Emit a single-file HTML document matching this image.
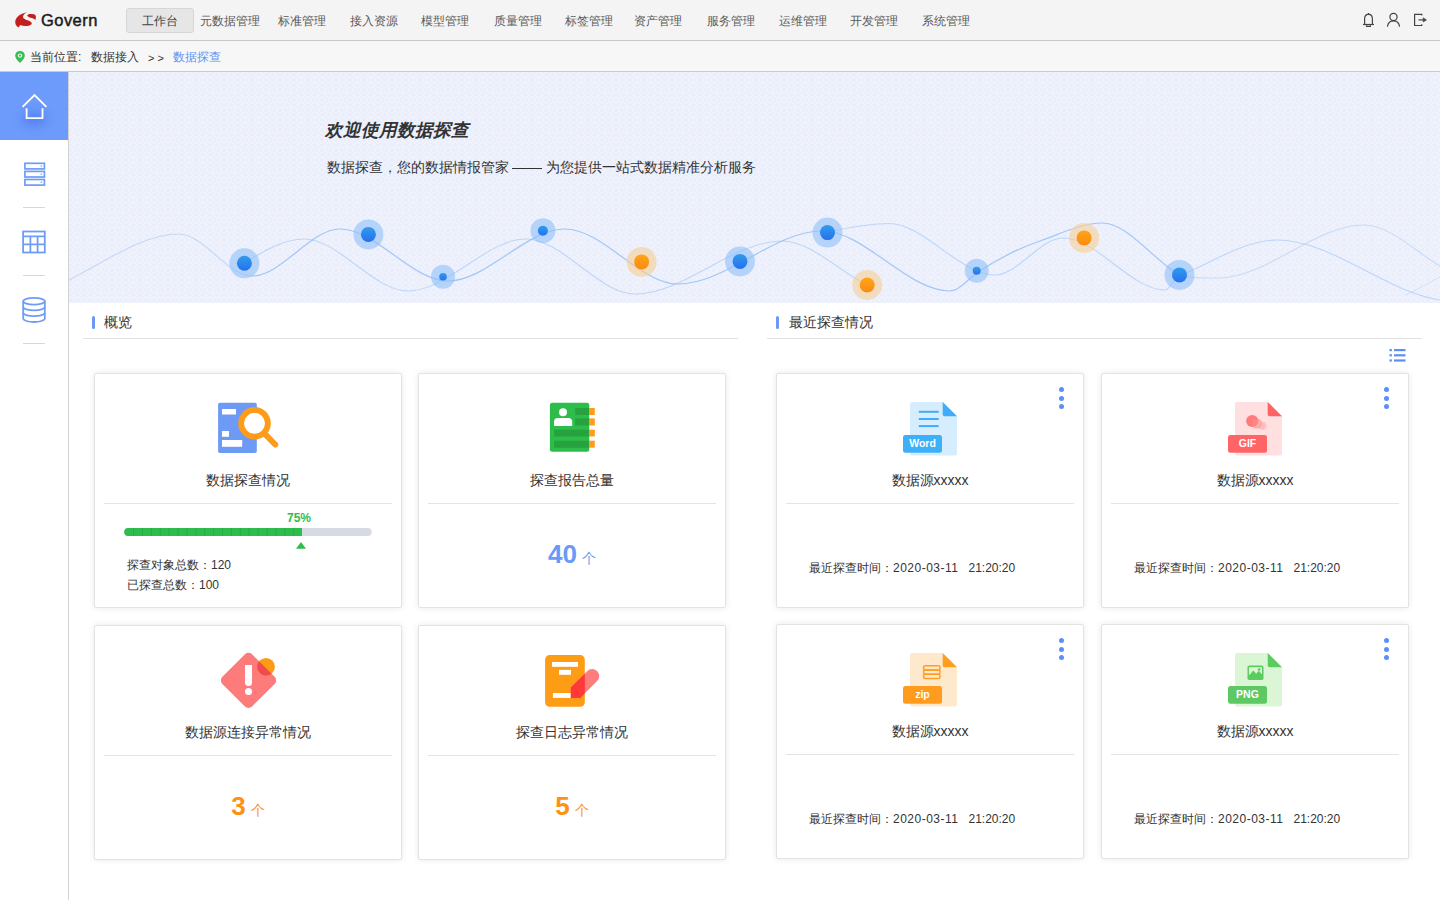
<!DOCTYPE html>
<html><head><meta charset="utf-8">
<style>
*{margin:0;padding:0;box-sizing:border-box}
html,body{width:1440px;height:900px;overflow:hidden;background:#fff;font-family:"Liberation Sans",sans-serif;color:#333}
.abs{position:absolute}
.t{position:absolute;white-space:nowrap;line-height:1}
#hdr{position:absolute;left:0;top:0;width:1440px;height:41px;background:#f4f4f4;border-bottom:1px solid #c9c9c9}
.nav{position:absolute;top:15px;font-size:12px;line-height:12px;color:#5a5a5a;white-space:nowrap}
#btn{position:absolute;left:126px;top:8px;width:68px;height:25px;background:#e6e6e6;border:1px solid #d6d6d6;border-radius:3px}
#crumb{position:absolute;left:0;top:41px;width:1440px;height:31px;background:#f7f7f7;border-bottom:1px solid #cbcbcb}
#side{position:absolute;left:0;top:72px;width:69px;height:828px;background:#fff;border-right:1px solid #d3d3d3}
#home{position:absolute;left:0;top:0;width:68px;height:68px;background:#6c9bfb}
.sep{position:absolute;left:23px;width:22px;height:1px;background:#d8d8d8}
#banner{position:absolute;left:69px;top:72px;width:1371px;height:231px;background:#eaeefb;overflow:hidden}
.sec-bar{position:absolute;width:3px;height:13px;background:#6b99f8;border-radius:2px}
.sec-t{position:absolute;font-size:14px;line-height:14px;color:#333;white-space:nowrap}
.sec-line{position:absolute;height:1px;background:#e2e2e2}
.card{position:absolute;width:308px;height:235px;background:#fff;border:1px solid #e3e3e3;border-radius:2px;box-shadow:0 0 6px rgba(0,0,0,0.09)}
.card .ttl{position:absolute;left:0;width:306px;top:99px;text-align:center;font-size:14px;line-height:14px;color:#333;white-space:nowrap}
.card .dv{position:absolute;left:9px;width:288px;top:129px;height:1px;background:#e4e4e4}
.card svg{position:absolute}
.num{position:absolute;left:0;width:306px;top:165px;text-align:center;white-space:nowrap}
.num b{font-size:26px;font-weight:bold}
.num span{font-size:14px;margin-left:5px;font-weight:500;position:relative;top:-0.5px}
.dots{position:absolute;left:282px;top:13px;width:5px}
.dots i{display:block;width:5px;height:5px;border-radius:50%;background:#5d8ff6;margin-bottom:3.6px}
.time{position:absolute;left:32px;top:187.5px;font-size:12px;line-height:12px;color:#333;white-space:nowrap}
</style></head>
<body>
<!-- HEADER -->
<div id="hdr">
  <svg class="abs" style="left:12px;top:9px" width="28" height="22" viewBox="12 9 28 22">
    <path d="M27.6 12.2 C24.5 12.6 21 13.8 18.6 15.8 C16 18 14.8 20.6 15.4 23.4 C15.8 25.4 17.4 26.9 19.1 27.6 C19.3 26.6 19.6 25.4 20.3 25 C22.3 25.9 25 26.3 27.5 25.9 C30 25.5 31.8 24.6 31.8 23.4 C31.5 21.8 29.6 20.8 27.4 20.2 C25.5 19.6 23.7 19 23.1 17.6 C22.7 16.4 23.6 14.6 24.9 13.6 C25.8 12.9 26.8 12.5 27.6 12.2 Z" fill="#c11f20"/>
    <path d="M27.2 15.8 C27.6 14.8 28.4 14.2 29.4 14.1 C31.2 13.9 33.4 14 34.6 14.6 C35.6 15.2 36 16.2 35.9 17.4 C35.8 18.4 35.6 19.3 35.4 20 C34.4 19 33 18.3 31.5 18 C30 17.6 28.6 17.2 27.2 15.8 Z" fill="#c11f20"/>
  </svg>
  <div class="t" style="left:41px;top:12px;font-size:16.5px;line-height:17px;color:#1a1a1a;font-weight:normal;-webkit-text-stroke:0.45px #1a1a1a;letter-spacing:0.45px">Govern</div>
  <div id="btn"></div>
  <div class="nav" style="left:141.5px;color:#444">工作台</div>
  <div class="nav" style="left:200px">元数据管理</div>
  <div class="nav" style="left:278px">标准管理</div>
  <div class="nav" style="left:350px">接入资源</div>
  <div class="nav" style="left:421px">模型管理</div>
  <div class="nav" style="left:494px">质量管理</div>
  <div class="nav" style="left:564.5px">标签管理</div>
  <div class="nav" style="left:634px">资产管理</div>
  <div class="nav" style="left:707px">服务管理</div>
  <div class="nav" style="left:779px">运维管理</div>
  <div class="nav" style="left:850px">开发管理</div>
  <div class="nav" style="left:922px">系统管理</div>
  <svg class="abs" style="left:1360px;top:12px" width="70" height="17" viewBox="1360 12 70 17" fill="none" stroke="#444" stroke-width="1.2">
    <path d="M1364.6 24.4 V19 C1364.6 16.2 1366.3 14.3 1368.5 14.1 C1370.7 14.3 1372.4 16.2 1372.4 19 V24.4"/>
    <path d="M1363 24.5 H1374"/><path d="M1368.5 13 V14.2"/>
    <path d="M1366.6 25.2 V26.3 H1370.4 V25.2"/>
    <circle cx="1393.5" cy="17" r="3.6"/>
    <path d="M1387.4 26.6 C1388 22.8 1390.3 20.8 1393.5 20.8 C1396.7 20.8 1399 22.8 1399.6 26.6"/>
    <path d="M1421.8 15.5 V14.4 H1414.6 V25.5 H1421.8 V24.3"/>
    <path d="M1418.5 19.9 H1424.5"/>
    <path d="M1423.2 17.8 L1426.5 19.9 L1423.2 22 Z" fill="#444" stroke-width="0.6"/>
  </svg>
</div>
<!-- BREADCRUMB -->
<div id="crumb">
  <svg class="abs" style="left:14px;top:9px" width="12" height="14" viewBox="0 0 12 14">
    <path d="M6 1 C3.2 1 1.2 3 1.2 5.6 C1.2 8.6 4.4 11.4 6 13 C7.6 11.4 10.8 8.6 10.8 5.6 C10.8 3 8.8 1 6 1 Z" fill="#35bf53"/>
    <circle cx="6" cy="5.6" r="2.2" fill="#f7f7f7"/><circle cx="6" cy="5.6" r="1.1" fill="#35bf53"/>
  </svg>
  <div class="t" style="left:30px;top:10px;font-size:12px;line-height:12px;color:#333">当前位置:</div>
  <div class="t" style="left:91px;top:10px;font-size:12px;line-height:12px;color:#333">数据接入</div>
  <div class="t" style="left:148px;top:11px;font-size:11px;line-height:12px;color:#333">&gt; &gt;</div>
  <div class="t" style="left:173px;top:10px;font-size:12px;line-height:12px;color:#5f95f2">数据探查</div>
</div>
<!-- SIDEBAR -->
<div id="side">
  <div id="home">
    <div class="abs" style="left:22px;top:40px;width:25px;height:14px;border-radius:50%;background:rgba(60,100,240,0.45);filter:blur(5px)"></div>
    <svg class="abs" style="left:20px;top:20px" width="28" height="28" viewBox="20 92 28 28" fill="none" stroke="#fff" stroke-width="1.8" stroke-linejoin="miter">
      <path d="M22.6 106.9 L34.5 95 L46.4 106.9"/>
      <path d="M26.6 108.2 V118.2 H42.5 V108.2"/>
    </svg>
  </div>
  <svg class="abs" style="left:20px;top:88px" width="28" height="28" viewBox="20 160 28 28" fill="none" stroke="#6f9df6" stroke-width="1.7">
    <rect x="24.9" y="163.3" width="19.5" height="5.6"/>
    <rect x="24.9" y="171.4" width="19.5" height="5.6"/>
    <rect x="24.9" y="179.5" width="19.5" height="5.6"/>
    <circle cx="41.3" cy="166.1" r="0.8" fill="#6f9df6" stroke="none"/>
    <circle cx="41.3" cy="174.2" r="0.8" fill="#6f9df6" stroke="none"/>
    <circle cx="41.3" cy="182.3" r="0.8" fill="#6f9df6" stroke="none"/>
  </svg>
  <div class="sep" style="top:135px"></div>
  <svg class="abs" style="left:20px;top:156px" width="28" height="28" viewBox="20 228 28 28" fill="none" stroke="#6f9df6" stroke-width="1.8">
    <rect x="23.1" y="231.5" width="21.7" height="21"/>
    <path d="M23.1 236.3 H44.8 M23.1 244.4 H44.8 M30.4 236.3 V252.5 M37.6 236.3 V252.5"/>
  </svg>
  <div class="sep" style="top:203px"></div>
  <svg class="abs" style="left:20px;top:224px" width="28" height="28" viewBox="20 296 28 28" fill="none" stroke="#6f9df6" stroke-width="1.8">
    <ellipse cx="34" cy="301.2" rx="10.8" ry="3.4"/>
    <path d="M23.2 301.2 V318.6 C23.2 320.5 28 322 34 322 C40 322 44.8 320.5 44.8 318.6 V301.2"/>
    <path d="M23.2 307 C23.2 308.9 28 310.4 34 310.4 C40 310.4 44.8 308.9 44.8 307"/>
    <path d="M23.2 312.8 C23.2 314.7 28 316.2 34 316.2 C40 316.2 44.8 314.7 44.8 312.8"/>
  </svg>
  <div class="sep" style="top:271px"></div>
</div>
<!-- BANNER -->
<div id="banner">
  <svg class="abs" style="left:0;top:0" width="1371" height="231" viewBox="69 72 1371 231">
    <defs>
      <pattern id="pt" x="0" y="0" width="14" height="10" patternUnits="userSpaceOnUse">
        <path d="M7 1.5 L11 5 L7 8.5 L3 5 Z M0 -3.5 L4 0 L0 3.5 M14 -3.5 L10 0 L14 3.5 M0 6.5 L4 10 L0 13.5 M14 6.5 L10 10 L14 13.5" fill="none" stroke="#f2f4fd" stroke-width="1.1"/>
      </pattern>
      <radialGradient id="gb" cx="0.5" cy="0.2" r="0.8"><stop offset="0" stop-color="#35a6f0"/><stop offset="1" stop-color="#2470ee"/></radialGradient>
      <linearGradient id="gbl" x1="0" y1="0" x2="0" y2="1"><stop offset="0" stop-color="#2f9ded"/><stop offset="1" stop-color="#2670ee"/></linearGradient>
      <linearGradient id="go" x1="0" y1="0" x2="0" y2="1"><stop offset="0" stop-color="#ffa516"/><stop offset="1" stop-color="#fb8a12"/></linearGradient>
    </defs>
    <rect x="69" y="72" width="1371" height="231" fill="url(#pt)"/>
    <g fill="none" stroke="#8dbdf6" stroke-linecap="round">
<path d="M40.0 292.0 C86.3 278.1 132.7 234.0 179.0 234.0 C203.3 234.0 227.7 276.0 252.0 276.0" stroke-opacity="0.45" stroke-width="1.1"/>
<path d="M252.0 276.0 C281.3 276.0 310.7 229.0 340.0 229.0 C376.0 229.0 412.0 281.0 448.0 281.0 C487.0 281.0 526.0 229.0 565.0 229.0 C602.7 229.0 640.3 284.0 678.0 284.0 C726.0 284.0 774.0 231.0 822.0 231.0 C864.7 231.0 907.3 291.0 950.0 291.0 C959.0 291.0 968.0 279.3 977.0 273.0 C998.0 258.3 1019.0 248.3 1040.0 241.0 C1060.7 233.8 1081.3 223.0 1102.0 223.0 C1127.7 223.0 1153.3 259.6 1179.0 275.0" stroke-opacity="0.80" stroke-width="1.2"/>
<path d="M244.0 263.0 C264.0 251.0 284.0 239.0 304.0 239.0 C338.7 239.0 373.3 291.0 408.0 291.0 C447.3 291.0 486.7 239.0 526.0 239.0 C562.3 239.0 598.7 294.0 635.0 294.0 C684.0 294.0 733.0 241.0 782.0 241.0 C810.3 241.0 838.7 270.8 867.0 285.0" stroke-opacity="0.50" stroke-width="1.1"/>
<path d="M827.0 232.0 C847.7 227.9 868.3 223.5 889.0 223.5 C918.3 223.5 947.7 259.3 977.0 271.0 C983.0 273.4 989.0 275.0 995.0 275.0 C1017.7 275.0 1040.3 238.0 1063.0 238.0 C1097.0 238.0 1131.0 290.0 1165.0 290.0 C1169.7 290.0 1174.3 277.9 1179.0 276.0 C1211.7 262.9 1244.3 240.0 1277.0 240.0 C1331.3 240.0 1385.7 291.9 1440.0 300.0" stroke-opacity="0.50" stroke-width="1.1"/>
<path d="M1179.0 275.0 C1192.0 278.9 1205.0 278.0 1218.0 278.0 C1266.7 278.0 1315.3 225.0 1364.0 225.0 C1389.3 225.0 1414.7 250.8 1440.0 266.0" stroke-opacity="0.40" stroke-width="1.1"/>
<path d="M1405.0 295.0 C1416.7 290.3 1428.3 282.8 1440.0 277.0" stroke-opacity="0.30" stroke-width="1.0"/>

    </g>
    <g>
<circle cx="244.4" cy="263.3" r="15.0" fill="#8fc0fa" fill-opacity="0.6"/><circle cx="244.4" cy="263.3" r="7.5" fill="url(#gbl)"/>
<circle cx="368.4" cy="234.4" r="15.0" fill="#8fc0fa" fill-opacity="0.6"/><circle cx="368.4" cy="234.4" r="7.5" fill="url(#gbl)"/>
<circle cx="443.0" cy="276.7" r="12.0" fill="#8fc0fa" fill-opacity="0.6"/><circle cx="443.0" cy="276.7" r="3.8" fill="url(#gbl)"/>
<circle cx="542.9" cy="230.7" r="12.5" fill="#8fc0fa" fill-opacity="0.6"/><circle cx="542.9" cy="230.7" r="5.0" fill="url(#gbl)"/>
<circle cx="641.6" cy="261.9" r="15.0" fill="#f6cf95" fill-opacity="0.6"/><circle cx="641.6" cy="261.9" r="7.5" fill="url(#go)"/>
<circle cx="740.0" cy="261.4" r="15.0" fill="#8fc0fa" fill-opacity="0.6"/><circle cx="740.0" cy="261.4" r="7.5" fill="url(#gbl)"/>
<circle cx="827.5" cy="232.6" r="15.0" fill="#8fc0fa" fill-opacity="0.6"/><circle cx="827.5" cy="232.6" r="7.5" fill="url(#gbl)"/>
<circle cx="867.2" cy="285.0" r="15.0" fill="#f6cf95" fill-opacity="0.6"/><circle cx="867.2" cy="285.0" r="7.5" fill="url(#go)"/>
<circle cx="976.7" cy="270.8" r="12.0" fill="#8fc0fa" fill-opacity="0.6"/><circle cx="976.7" cy="270.8" r="4.0" fill="url(#gbl)"/>
<circle cx="1084.1" cy="237.9" r="15.0" fill="#f6cf95" fill-opacity="0.6"/><circle cx="1084.1" cy="237.9" r="7.5" fill="url(#go)"/>
<circle cx="1179.5" cy="274.9" r="15.0" fill="#8fc0fa" fill-opacity="0.6"/><circle cx="1179.5" cy="274.9" r="7.5" fill="url(#gbl)"/>
    </g>
  </svg>
  <div class="t" style="left:255.5px;top:48.5px;font-size:17.5px;line-height:18px;font-weight:bold;font-style:italic;color:#333">欢迎使用数据探查</div>
  <div class="t" style="left:257.5px;top:87.5px;font-size:14px;line-height:14px;color:#333">数据探查，您的数据情报管家 <span style="display:inline-block;transform:scaleX(1.07);margin:0 1px">——</span> 为您提供一站式数据精准分析服务</div>
</div>
<!-- SECTION HEADERS -->
<div class="sec-bar" style="left:92px;top:316px"></div>
<div class="sec-t" style="left:104px;top:315px">概览</div>
<div class="sec-line" style="left:83px;top:338px;width:655px"></div>
<div class="sec-bar" style="left:776px;top:316px"></div>
<div class="sec-t" style="left:789px;top:315px">最近探查情况</div>
<div class="sec-line" style="left:767px;top:338px;width:655px"></div>
<svg class="abs" style="left:1388px;top:347px" width="20" height="16" viewBox="1388 347 20 16" fill="#5d8ff6">
  <rect x="1389.5" y="349" width="2.4" height="2.2"/><rect x="1394" y="349" width="11.5" height="2.2"/>
  <rect x="1389.5" y="354.2" width="2.4" height="2.2"/><rect x="1394" y="354.2" width="11.5" height="2.2"/>
  <rect x="1389.5" y="359.4" width="2.4" height="2.2"/><rect x="1394" y="359.4" width="11.5" height="2.2"/>
</svg>
<div class="card" style="left:94px;top:373px">
<svg style="left:0;top:0" width="306" height="233" viewBox="95 374 306 233">
<rect x="218.1" y="402.8" width="38.7" height="50.2" rx="1.8" fill="#6c9af5"/>
<rect x="222" y="409" width="14" height="5.5" fill="#fff"/>
<rect x="222" y="431" width="7" height="5.8" fill="#fff"/>
<rect x="222" y="440" width="20.2" height="6.8" fill="#fff"/>
<line x1="264.5" y1="433.5" x2="275.2" y2="444.5" stroke="#fd9c1b" stroke-width="6" stroke-linecap="round"/>
<circle cx="254.5" cy="423.3" r="13.4" fill="#fff" stroke="#fd9c1b" stroke-width="5.8"/>
<rect x="124.2" y="528" width="247.5" height="8" rx="4" fill="#d6dbe3"/>
<path d="M128.2 528 H302 V536 H128.2 A4 4 0 0 1 128.2 528 Z" fill="#2dbd4c"/>
<g stroke="#27a843" stroke-width="0.8">
<line x1="133.5" y1="528" x2="133.5" y2="536"/>
<line x1="142.4" y1="528" x2="142.4" y2="536"/>
<line x1="151.3" y1="528" x2="151.3" y2="536"/>
<line x1="160.2" y1="528" x2="160.2" y2="536"/>
<line x1="169.1" y1="528" x2="169.1" y2="536"/>
<line x1="178.0" y1="528" x2="178.0" y2="536"/>
<line x1="186.9" y1="528" x2="186.9" y2="536"/>
<line x1="195.8" y1="528" x2="195.8" y2="536"/>
<line x1="204.7" y1="528" x2="204.7" y2="536"/>
<line x1="213.6" y1="528" x2="213.6" y2="536"/>
<line x1="222.5" y1="528" x2="222.5" y2="536"/>
<line x1="231.4" y1="528" x2="231.4" y2="536"/>
<line x1="240.3" y1="528" x2="240.3" y2="536"/>
<line x1="249.2" y1="528" x2="249.2" y2="536"/>
<line x1="258.1" y1="528" x2="258.1" y2="536"/>
<line x1="267.0" y1="528" x2="267.0" y2="536"/>
<line x1="275.9" y1="528" x2="275.9" y2="536"/>
<line x1="284.8" y1="528" x2="284.8" y2="536"/>
<line x1="293.7" y1="528" x2="293.7" y2="536"/>
</g>
<path d="M296 548.8 L306 548.8 L301 541.9 Z" fill="#2dbd4c"/>
</svg>
<div class="ttl">数据探查情况</div>
<div class="dv"></div>
<div class="t" style="left:192px;top:138px;font-size:12px;line-height:12px;font-weight:bold;color:#2dbd4c">75%</div>
<div class="t" style="left:32px;top:185px;font-size:12px;line-height:12px;color:#333">探查对象总数：120</div>
<div class="t" style="left:32px;top:205px;font-size:12px;line-height:12px;color:#333">已探查总数：100</div>

</div>
<div class="card" style="left:418px;top:373px">
<svg style="left:0;top:0" width="306" height="233" viewBox="419 374 306 233">
<rect x="549.9" y="402.8" width="39.4" height="48.9" rx="2.5" fill="#2ebd4b"/>
<circle cx="563" cy="412.2" r="4" fill="#fff"/>
<path d="M554 426 V421.5 C554 419.5 555.5 417.9 557.5 417.9 H568.7 C570.7 417.9 572.2 419.5 572.2 421.5 V426 Z" fill="#fff"/>
<g fill="#26a23f">
<rect x="575.2" y="408" width="14.1" height="7"/>
<rect x="575.2" y="418.4" width="14.1" height="7.1"/>
<rect x="554" y="429.7" width="35.3" height="6.8"/>
<rect x="554" y="440.7" width="35.3" height="7"/>
</g>
<g fill="#fd9d1c">
<rect x="589.3" y="408" width="5.5" height="7"/>
<rect x="589.3" y="418.4" width="5.5" height="7.1"/>
<rect x="589.3" y="429.7" width="5.5" height="6.8"/>
<rect x="589.3" y="440.7" width="5.5" height="7"/>
</g>
</svg>
<div class="ttl">探查报告总量</div>
<div class="dv"></div>
<div class="num" style="color:#6a9af5"><b>40</b><span>个</span></div>

</div>
<div class="card" style="left:94px;top:625px">
<svg style="left:0;top:0" width="306" height="233" viewBox="95 626 306 233">
<defs><clipPath id="dia"><rect x="-21" y="-21" width="42" height="42" rx="5" transform="translate(248.5 680.4) rotate(45)"/></clipPath></defs>
<rect x="-21" y="-21" width="42" height="42" rx="5" transform="translate(248.5 680.4) rotate(45)" fill="#fd7b7b"/>
<circle cx="266" cy="666.8" r="8.9" fill="#fe9b16"/>
<circle cx="266" cy="666.8" r="8.9" fill="#f04b4e" clip-path="url(#dia)"/>
<path d="M245 665 H252 V682.5 A3.5 3.5 0 0 1 245 682.5 Z" fill="#fff"/>
<circle cx="248.5" cy="691.5" r="3.5" fill="#fff"/>
</svg>
<div class="ttl">数据源连接异常情况</div>
<div class="dv"></div>
<div class="num" style="color:#fd9116"><b>3</b><span>个</span></div>

</div>
<div class="card" style="left:418px;top:625px">
<svg style="left:0;top:0" width="306" height="233" viewBox="419 626 306 233">
<defs><clipPath id="odoc"><rect x="545.1" y="655.1" width="39.7" height="51.7" rx="4.5"/></clipPath></defs>
<rect x="545.1" y="655.1" width="39.7" height="51.7" rx="4.5" fill="#fd9c15"/>
<rect x="552" y="662" width="26" height="4.8" fill="#fff"/>
<rect x="559" y="669.9" width="12" height="4.9" fill="#fff"/>
<rect x="552.9" y="693" width="18.1" height="4.9" fill="#fff"/>
<path id="pen" d="M570.8 687.6 L587.25 671.15 A7 7 0 0 1 597.15 681.05 L580.2 698 H570.8 Z" fill="#fd7d7d"/>
<path d="M570.8 687.6 L587.25 671.15 A7 7 0 0 1 597.15 681.05 L580.2 698 H570.8 Z" fill="#ff3838" clip-path="url(#odoc)"/>
</svg>
<div class="ttl">探查日志异常情况</div>
<div class="dv"></div>
<div class="num" style="color:#fd9116"><b>5</b><span>个</span></div>

</div>
<div class="card" style="left:776px;top:373px">
<svg style="left:0;top:0" width="306" height="233" viewBox="777 374 306 233"><g transform="translate(0 0)"><path d="M912 402 H942.7 L957 416.3 V453.5 A2 2 0 0 1 955 455.5 H912 A2 2 0 0 1 910 453.5 V404 A2 2 0 0 1 912 402 Z" fill="#d5edfd"/><path d="M942.7 402 L957 416.3 H944.7 A2 2 0 0 1 942.7 414.3 Z" fill="#40abf6"/><g fill="#40abf6"><rect x="918.8" y="410.8" width="19.9" height="2"/><rect x="918.8" y="418" width="19.9" height="2"/><rect x="918.8" y="425.1" width="19.9" height="2"/></g><rect x="903" y="435.1" width="39" height="17.7" rx="2.5" fill="#3db0f9"/><text x="922.5" y="447.3" text-anchor="middle" font-family="Liberation Sans" font-weight="bold" font-size="10.5" fill="#fff">Word</text></g></svg>
<div class="ttl">数据源xxxxx</div>
<div class="dv"></div>
<div class="dots"><i></i><i></i><i></i></div>
<div class="time">最近探查时间：<span style="letter-spacing:0.5px">2020-03-11</span>&nbsp;&nbsp;&nbsp;21:20:20</div>

</div>
<div class="card" style="left:1101px;top:373px">
<svg style="left:0;top:0" width="306" height="233" viewBox="1102 374 306 233"><g transform="translate(325 0)"><path d="M912 402 H942.7 L957 416.3 V453.5 A2 2 0 0 1 955 455.5 H912 A2 2 0 0 1 910 453.5 V404 A2 2 0 0 1 912 402 Z" fill="#ffdfe0"/><path d="M942.7 402 L957 416.3 H944.7 A2 2 0 0 1 942.7 414.3 Z" fill="#ff6262"/><circle cx="927.2" cy="421" r="6.1" fill="#ff7b7b"/><circle cx="932" cy="423.6" r="5.2" fill="#ff8c8c" fill-opacity="0.6"/><circle cx="937.3" cy="425.8" r="4.1" fill="#ffa9a9" fill-opacity="0.6"/><rect x="903" y="435.1" width="39" height="17.7" rx="2.5" fill="#ff6565"/><text x="922.5" y="447.3" text-anchor="middle" font-family="Liberation Sans" font-weight="bold" font-size="10.5" fill="#fff">GIF</text></g></svg>
<div class="ttl">数据源xxxxx</div>
<div class="dv"></div>
<div class="dots"><i></i><i></i><i></i></div>
<div class="time">最近探查时间：<span style="letter-spacing:0.5px">2020-03-11</span>&nbsp;&nbsp;&nbsp;21:20:20</div>

</div>
<div class="card" style="left:776px;top:624px">
<svg style="left:0;top:0" width="306" height="233" viewBox="777 625 306 233"><g transform="translate(0 251)"><path d="M912 402 H942.7 L957 416.3 V453.5 A2 2 0 0 1 955 455.5 H912 A2 2 0 0 1 910 453.5 V404 A2 2 0 0 1 912 402 Z" fill="#ffe9cc"/><path d="M942.7 402 L957 416.3 H944.7 A2 2 0 0 1 942.7 414.3 Z" fill="#ff9d1e"/><g fill="none" stroke="#ff9d1e" stroke-width="1.5"><path d="M938.8 414.8 H925.6 A2.1 2.1 0 0 0 925.6 419 H938.8"/><path d="M938.8 419 H925.6 A2.1 2.1 0 0 0 925.6 423.2 H938.8"/><path d="M938.8 423.2 H925.6 A2.1 2.1 0 0 0 925.6 427.4 H938.8"/><path d="M938.8 414.8 A1.2 2.1 0 0 1 938.8 419 A1.2 2.1 0 0 1 938.8 423.2 A1.2 2.1 0 0 1 938.8 427.4"/></g><rect x="903" y="435.1" width="39" height="17.7" rx="2.5" fill="#ff9c1e"/><text x="922.5" y="447.3" text-anchor="middle" font-family="Liberation Sans" font-weight="bold" font-size="10.5" fill="#fff">zip</text></g></svg>
<div class="ttl">数据源xxxxx</div>
<div class="dv"></div>
<div class="dots"><i></i><i></i><i></i></div>
<div class="time">最近探查时间：<span style="letter-spacing:0.5px">2020-03-11</span>&nbsp;&nbsp;&nbsp;21:20:20</div>

</div>
<div class="card" style="left:1101px;top:624px">
<svg style="left:0;top:0" width="306" height="233" viewBox="1102 625 306 233"><g transform="translate(325 251)"><path d="M912 402 H942.7 L957 416.3 V453.5 A2 2 0 0 1 955 455.5 H912 A2 2 0 0 1 910 453.5 V404 A2 2 0 0 1 912 402 Z" fill="#dbf6d5"/><path d="M942.7 402 L957 416.3 H944.7 A2 2 0 0 1 942.7 414.3 Z" fill="#5ccb60"/><rect x="922.5" y="414.5" width="16" height="14.5" rx="1.8" fill="#5ccb60"/><rect x="924" y="416.2" width="13" height="8" fill="#daf6d5"/><path d="M924 424.5 L928.2 419.5 L931.2 422.7 L933.8 419.8 L937 423.5 V425.5 H924 Z" fill="#5ccb60"/><circle cx="934.2" cy="418.5" r="1.3" fill="#5ccb60"/><rect x="903" y="435.1" width="39" height="17.7" rx="2.5" fill="#5ec863"/><text x="922.5" y="447.3" text-anchor="middle" font-family="Liberation Sans" font-weight="bold" font-size="10.5" fill="#fff">PNG</text></g></svg>
<div class="ttl">数据源xxxxx</div>
<div class="dv"></div>
<div class="dots"><i></i><i></i><i></i></div>
<div class="time">最近探查时间：<span style="letter-spacing:0.5px">2020-03-11</span>&nbsp;&nbsp;&nbsp;21:20:20</div>

</div>
</body></html>
